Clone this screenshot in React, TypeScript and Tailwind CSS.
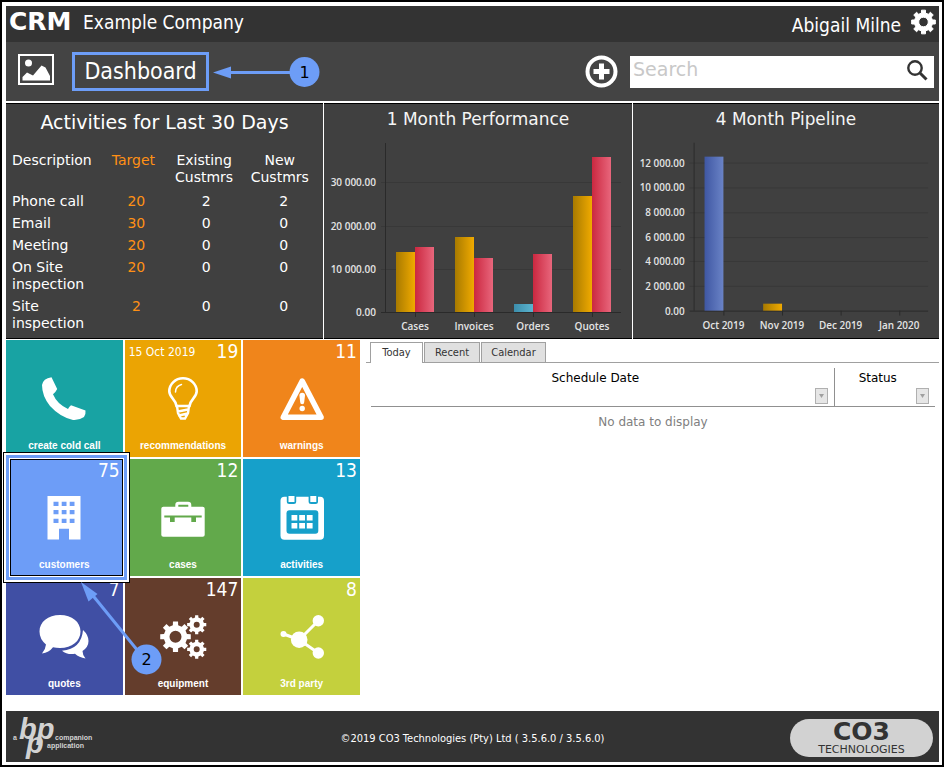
import React from 'react';

const activities = [
  { name: 'Phone call', target: 20, existing: 2, fresh: 2 },
  { name: 'Email', target: 30, existing: 0, fresh: 0 },
  { name: 'Meeting', target: 20, existing: 0, fresh: 0 },
  { name: 'On Site inspection', target: 20, existing: 0, fresh: 0 },
  { name: 'Site inspection', target: 2, existing: 0, fresh: 0 },
];

type Bar = { value: number; fill: string };
type Group = { label: string; bars: Bar[] };

const performance: Group[] = [
  { label: 'Cases', bars: [{ value: 13900, fill: 'gold' }, { value: 15000, fill: 'red' }] },
  { label: 'Invoices', bars: [{ value: 17400, fill: 'gold' }, { value: 12500, fill: 'red' }] },
  { label: 'Orders', bars: [{ value: 1900, fill: 'teal' }, { value: 13500, fill: 'red' }] },
  { label: 'Quotes', bars: [{ value: 26900, fill: 'gold' }, { value: 35900, fill: 'red' }] },
];

const pipeline: Group[] = [
  { label: 'Oct 2019', bars: [{ value: 12500, fill: 'blue' }] },
  { label: 'Nov 2019', bars: [{ value: 560, fill: 'gold' }] },
  { label: 'Dec 2019', bars: [] },
  { label: 'Jan 2020', bars: [] },
];

const gradients = [
  { id: 'gold', from: '#a87a00', to: '#f0aa00' },
  { id: 'red', from: '#cb2840', to: '#e8667c' },
  { id: 'teal', from: '#3c8eac', to: '#5cb4cf' },
  { id: 'blue', from: '#3f57a3', to: '#6a83c6' },
];

const gearPath = (cx: number, cy: number, r: number, hole: number, teeth = 8) => {
  const inner = r * 0.76;
  const step = (Math.PI * 2) / teeth;
  const points: string[] = [];
  for (let i = 0; i < teeth; i++) {
    const a = i * step - Math.PI / 2;
    [[-0.29, inner], [-0.21, r], [0.21, r], [0.29, inner]].forEach(([offset, radius]) => {
      const t = a + offset * step;
      points.push(`${(cx + radius * Math.cos(t)).toFixed(2)} ${(cy + radius * Math.sin(t)).toFixed(2)}`);
    });
  }
  return `M${points.join('L')}ZM${cx - hole} ${cy}a${hole} ${hole} 0 1 0 ${hole * 2} 0a${hole} ${hole} 0 1 0 ${-hole * 2} 0Z`;
};

const PhoneIcon = () => (
  <path d="M13.5.2 19.2 12Q17.5 15.5 15 17.3 19 27 30 32 31 30 33 28.2L47.5 33.5Q48 37 46 40 41 43.5 35 43 22 40 12 29 4 19 4 8 5 1.5 13.5.2Z" />
);

const BulbIcon = () => (
  <g fill="none" stroke="white" strokeLinecap="round">
    <path strokeWidth="2.6" d="M19.5 29C18.5 22 12.3 20.5 12.3 14.3A13.7 13 0 0 1 39.7 14.3C39.7 20.5 33.5 22 32.5 29Z" />
    <path strokeWidth="1.5" d="M18.5 15A8 8 0 0 1 24.5 7.5" />
    <path strokeWidth="2.4" d="M20 29 21 36 24 41.5H28L31 36 32 29M21 34.5 31 32.5M22 38.5 30.5 36.5" />
  </g>
);

const WarningIcon = () => (
  <>
    <path fill="none" stroke="white" strokeWidth="5.5" strokeLinejoin="round" d="M26.2 4 7.3 40.3H45.1Z" />
    <path d="M23.4 18.5a2.8 2.8 0 0 1 5.6 0l-.8 6.8a2 2 0 0 1-4 0Z" />
    <circle cx="26.2" cy="31.5" r="2.7" />
  </>
);

const BuildingIcon = () => (
  <path
    fillRule="evenodd"
    d="M9.5 0H42.5V43.5H31V32.7H21V43.5H9.5ZM15.5 5.7V10H20.5V5.7ZM23.7 5.7V10H28.5V5.7ZM31.7 5.7V10H36.5V5.7ZM15.5 14V18.3H20.5V14ZM23.7 14V18.3H28.5V14ZM31.7 14V18.3H36.5V14ZM15.5 22.7V27H20.5V22.7ZM23.7 22.7V27H28.5V22.7ZM31.7 22.7V27H36.5V22.7Z"
  />
);

const BriefcaseIcon = () => (
  <>
    <path fill="none" stroke="white" strokeWidth="3" d="M19.8 12V9q0-1.8 1.8-1.8H31q1.8 0 1.8 1.8v3" />
    <rect x="4.3" y="10.7" width="43.4" height="30" rx="2" />
    <path fill="#62a94b" d="M7.3 19.5H44.7V21.5H39V26H34.3V21.5H17.7V26H13V21.5H7.3Z" />
  </>
);

const CalendarIcon = () => (
  <>
    <rect x="4.5" y="0.8" width="43.5" height="43" rx="4" />
    <path fill="#16a0ca" d="M10.8 0H20.2V5.5Q20.2 8 17.7 8H13.3Q10.8 8 10.8 5.5ZM32.6 0H42V5.5Q42 8 39.5 8H35.1Q32.6 8 32.6 5.5Z" />
    <path d="M12.5 0H18.5V6H12.5ZM34.3 0H40.3V6H34.3Z" />
    <rect x="10.5" y="14.3" width="31.8" height="23.4" rx="3" fill="#16a0ca" />
    <path d="M15.5 19H21.3V24.5H15.5ZM23.2 19H29V24.5H23.2ZM30.8 19H36.6V24.5H30.8ZM15.5 27H21.3V32.5H15.5ZM23.2 27H29V32.5H23.2ZM30.8 27H36.6V32.5H30.8Z" />
  </>
);

const ChatIcon = () => (
  <>
    <path d="M22 0C34 0 42.5 7 42.5 16.5S34 33 22 33Q18 33 15 32.2 11 37.5 4 38.5 7.5 34.5 8 29.5 1.5 24 1.5 16.5C1.5 7 10 0 22 0Z" />
    <path d="M45 15Q50.5 20 50.5 26 50.5 32 44.5 36 44.5 40 47.5 43.5 41 42.5 37 38.8 29 40 24 35.7 43.5 34 45 15Z" />
  </>
);

const GearsIcon = () => (
  <>
    <path fillRule="evenodd" d={gearPath(18.5, 21.7, 15.5, 6)} />
    <path fillRule="evenodd" d={gearPath(39.7, 9.7, 9.7, 3)} />
    <path fillRule="evenodd" d={gearPath(39.7, 34.3, 9.7, 3)} />
  </>
);

const ShareIcon = () => (
  <>
    <path fill="none" stroke="white" strokeWidth="3" d="M7.5 19 23.2 24.7 42.3 5.7M23.2 24.7 42.3 38" />
    <circle cx="23.2" cy="24.7" r="8.3" />
    <circle cx="42.3" cy="5.7" r="5.7" />
    <circle cx="42.3" cy="38" r="5.7" />
    <circle cx="7.5" cy="19" r="3" />
  </>
);

const tiles = [
  { label: 'create cold call', bg: 'bg-[#18a3a3]', Icon: PhoneIcon },
  { label: 'recommendations', count: 19, date: '15 Oct 2019', bg: 'bg-[#eba403]', Icon: BulbIcon },
  { label: 'warnings', count: 11, bg: 'bg-[#f0851b]', Icon: WarningIcon },
  { label: 'customers', count: 75, bg: 'bg-[#6d9df7]', Icon: BuildingIcon, selected: true },
  { label: 'cases', count: 12, bg: 'bg-[#62a94b]', Icon: BriefcaseIcon },
  { label: 'activities', count: 13, bg: 'bg-[#16a0ca]', Icon: CalendarIcon },
  { label: 'quotes', count: 7, bg: 'bg-[#404fa4]', Icon: ChatIcon },
  { label: 'equipment', count: 147, bg: 'bg-[#643d2c]', Icon: GearsIcon },
  { label: '3rd party', count: 8, bg: 'bg-[#c4d03d]', Icon: ShareIcon },
];

const BarChart: React.FC<{ title: string; groups: Group[]; ticks: number[]; max: number }> = ({ title, groups, ticks, max }) => {
  const base = 208;
  const scale = 169 / max;
  const format = (n: number) => (n >= 1000 ? `${n / 1000} 000.00` : '0.00');

  return (
    <section className="bg-[#404040] border-y border-black">
      <svg viewBox="0 0 308 234" className="block w-full" role="img" aria-label={title}>
        <defs>
          {gradients.map((g) => (
            <linearGradient key={g.id} id={g.id}>
              <stop offset="0" stopColor={g.from} />
              <stop offset="1" stopColor={g.to} />
            </linearGradient>
          ))}
        </defs>
        <text x="154" y="21" textAnchor="middle" fill="#f5f5f5" fontSize="17" fontFamily="DejaVu Sans, sans-serif">{title}</text>
        {ticks.map((tick) => (
          <g key={tick}>
            <path d={`M57 ${Math.round(base - tick * scale) + 0.5}H297`} stroke={tick ? '#383838' : '#2a2a2a'} />
            <text x="52" y={Math.round(base - tick * scale) + 4} textAnchor="end" fill="#e4e4e4" fontSize="10" fontWeight="600" fontFamily="Open Sans, sans-serif">
              {format(tick)}
            </text>
          </g>
        ))}
        <path d="M61.5 39V208" stroke="#2a2a2a" />
        {groups.map((group, i) => {
          const center = 91 + i * 59;
          return (
            <g key={group.label}>
              <path d={`M${center + 0.5} 208v5`} stroke="#2a2a2a" />
              {group.bars.map((bar, n) => (
                <rect
                  key={n}
                  x={center - 19 + n * 19}
                  y={Math.round(base - bar.value * scale)}
                  width="19"
                  height={Math.round(bar.value * scale)}
                  fill={`url(#${bar.fill})`}
                />
              ))}
              <text x={center} y="226" textAnchor="middle" fill="#e4e4e4" fontSize="10" fontWeight="600" fontFamily="Open Sans, sans-serif">
                {group.label}
              </text>
            </g>
          );
        })}
      </svg>
    </section>
  );
};

const Header = () => (
  <header className="text-white font-['DejaVu_Sans_Condensed','DejaVu_Sans',sans-serif]">
    <div className="flex items-center h-9 bg-[#333333] px-[3px] pb-1">
      <span className="w-[74px] text-[25px] leading-8 font-bold font-['DejaVu_Sans',sans-serif]">CRM</span>
      <span className="text-[19px] leading-8">Example Company</span>
      <span className="ml-auto mr-2.5 pt-1.5 text-[19px] leading-8">Abigail Milne</span>
      <button aria-label="Settings">
        <svg width="25" height="26" viewBox="0 0 25 26" fill="white" stroke="white" strokeLinejoin="round">
          <path fillRule="evenodd" d={gearPath(12.5, 13, 12, 4.8)} />
        </svg>
      </button>
    </div>
    <div className="flex items-center h-[59px] bg-[#444444] pl-3 pr-[5px]">
      <svg width="36" height="32" viewBox="0 0 36 32" className="-mt-1" fill="white">
        <rect x="1" y="1" width="34" height="29" fill="none" stroke="white" strokeWidth="2" />
        <circle cx="10.5" cy="9" r="3.5" />
        <path d="M4.5 26.5V23L9 18.5 15 21.5 23.5 11.5 27.5 13.5 32 22V26.5Z" />
      </svg>
      <h1 className="ml-[18px] h-[39px] w-[137px] border-[3px] border-[#6d9df7] text-center text-[23px] leading-8">Dashboard</h1>
      <svg width="108" height="30" viewBox="0 0 108 30" className="ml-1 mr-auto">
        <path d="M16 15.5H80" stroke="#6d9df7" strokeWidth="3" />
        <path d="M0 15.5 18 9.5V21.5Z" fill="#6d9df7" />
        <circle cx="91.5" cy="15" r="15" fill="#6d9df7" />
        <text x="91.5" y="21" textAnchor="middle" fontSize="16" fontFamily="DejaVu Sans, sans-serif" fill="black">1</text>
      </svg>
      <button aria-label="Add" className="mr-3">
        <svg width="33" height="33" viewBox="0 0 33 33" fill="none" stroke="white" strokeWidth="4">
          <circle cx="16.5" cy="16.5" r="14" />
          <path strokeWidth="5" d="M16.5 8.5V24.5M8.5 16.5H24.5" />
        </svg>
      </button>
      <form className="flex items-center h-8 w-[304px] bg-white pr-1.5">
        <input
          type="text"
          aria-label="Search"
          placeholder="Search"
          className="flex-1 min-w-0 h-8 pl-[3px] pb-1.5 text-[19px] text-black placeholder:text-[#c8c8c8] outline-none font-['DejaVu_Sans',sans-serif]"
        />
        <button type="button" aria-label="Run search" className="-mt-1">
          <svg width="22" height="22" viewBox="0 0 22 22" fill="none" stroke="#333333">
            <circle cx="9" cy="9" r="6.7" strokeWidth="2.4" />
            <path d="M13.5 13.5 20.5 20.5" strokeWidth="3" />
          </svg>
        </button>
      </form>
    </div>
  </header>
);

const Activities = () => (
  <section className="bg-[#404040] border-y border-black text-white font-['DejaVu_Sans',sans-serif]">
    <h2 className="pt-1.5 text-center text-[19px] leading-6">Activities for Last 30 Days</h2>
    <table className="mt-[18px] w-full table-fixed text-[14px] leading-[17px]">
      <colgroup>
        <col className="w-[30%]" />
        <col className="w-[21%]" />
        <col className="w-[23%]" />
        <col className="w-[26%]" />
      </colgroup>
      <thead>
        <tr className="align-top">
          <th className="pl-1.5 pb-[7px] text-left font-normal">Description</th>
          <th className="pr-0.5 pb-[7px] font-normal text-[#ff9015]">Target</th>
          <th className="pb-[7px] font-normal">Existing Custmrs</th>
          <th className="pr-1 pb-[7px] font-normal">New Custmrs</th>
        </tr>
      </thead>
      <tbody>
        {activities.map((row) => (
          <tr key={row.name} className="align-top text-center">
            <td className="pl-1.5 pb-[5px] text-left">{row.name}</td>
            <td className="pl-1 text-[#ff9015]">{row.target}</td>
            <td className="pl-1">{row.existing}</td>
            <td className="pl-1">{row.fresh}</td>
          </tr>
        ))}
      </tbody>
    </table>
  </section>
);

const Tiles = () => (
  <nav className="relative grid grid-cols-3 gap-0.5 w-[354px]">
    {tiles.map(({ label, count, date, bg, Icon, selected }) => (
      <button key={label} className={`relative flex flex-col items-center h-[117px] text-white ${bg}`}>
        <span className="flex items-start justify-between w-full h-[37px] pl-1 pr-[3px] font-['DejaVu_Sans_Condensed','DejaVu_Sans',sans-serif]">
          <span className="text-[12px] leading-6">{date}</span>
          <span className="text-[19px] leading-[22px]">{count}</span>
        </span>
        <svg width="52" height="44" viewBox="0 0 52 44" fill="white">
          <Icon />
        </svg>
        <span className="mt-auto pb-[3px] text-[10px] leading-4 font-bold font-['Liberation_Sans',sans-serif]">{label}</span>
        {selected && (
          <span className="absolute -inset-[7px] -left-[3px] z-10 border border-black">
            <span className="block h-full border-2 border-white">
              <span className="block h-full border-[3px] border-[#6d9df7]">
                <span className="block h-full border border-white">
                  <span className="block h-full border border-black" />
                </span>
              </span>
            </span>
          </span>
        )}
      </button>
    ))}
    <svg width="84" height="96" viewBox="0 0 84 96" className="absolute left-[73px] top-[240px] z-20 pointer-events-none">
      <path d="M11 12 59 71" stroke="#6d9df7" strokeWidth="3" />
      <path d="M2 2 18.5 14 9.5 21.5Z" fill="#6d9df7" />
      <circle cx="67.5" cy="79.5" r="15" fill="#6d9df7" />
      <text x="67.5" y="85" textAnchor="middle" fontSize="16" fontFamily="DejaVu Sans, sans-serif" fill="black">2</text>
    </svg>
  </nav>
);

const FilterButton: React.FC<{ label: string }> = ({ label }) => (
  <button aria-label={label} className="ml-auto mr-1.5 flex items-center justify-center w-[13px] h-4 border border-[#b0b0b0] bg-[#e6e6e6]">
    <svg width="5" height="4" viewBox="0 0 5 4" fill="#a0a0a0"><path d="M0 0H5L2.5 4Z" /></svg>
  </button>
);

const Schedule = () => (
  <section className="flex-1 ml-1.5 pt-0.5">
    <div className="flex gap-px h-[21px] pl-1 border-b border-[#a0a0a0] text-[11px] leading-5 text-[#333333] font-['DejaVu_Sans_Condensed','DejaVu_Sans',sans-serif]">
      <button className="h-[21px] w-[53px] border border-b-0 border-[#a0a0a0] bg-white">Today</button>
      <button className="w-14 border border-b-0 border-[#a0a0a0] bg-[#e0e0e0]">Recent</button>
      <button className="w-[65px] border border-b-0 border-[#a0a0a0] bg-[#e0e0e0]">Calendar</button>
    </div>
    <div className="pl-[5px] pr-1 pt-[5px] font-['DejaVu_Sans',sans-serif] text-[12px]">
      <table className="w-full">
        <thead>
          <tr className="border-b border-[#909090]">
            <th className="border-r border-[#909090] p-0 font-normal">
              <div className="h-5 leading-5 pr-3.5">Schedule Date</div>
              <div className="flex h-[18px]"><FilterButton label="Filter schedule date" /></div>
            </th>
            <th className="w-[101px] p-0 font-normal">
              <div className="h-5 leading-5 pr-3.5">Status</div>
              <div className="flex h-[18px]"><FilterButton label="Filter status" /></div>
            </th>
          </tr>
        </thead>
        <tbody>
          <tr>
            <td colSpan={2} className="pt-1.5 text-center leading-[18px] text-[#808080]">No data to display</td>
          </tr>
        </tbody>
      </table>
    </div>
  </section>
);

const Footer = () => (
  <footer className="flex items-center justify-between h-[51px] bg-[#333333] px-1.5 pt-0.5 text-white">
    <svg width="143" height="46" viewBox="0 0 143 46" className="overflow-visible" fill="#d2d2d2" fontFamily="Liberation Sans, sans-serif" fontWeight="bold">
      <text x="1" y="25" fontSize="7">a</text>
      <text x="7" y="24" fontSize="29" fontStyle="italic">bp</text>
      <text x="14" y="38" fontSize="29" fontStyle="italic">p</text>
      <text x="43" y="25" fontSize="7">companion</text>
      <text x="35" y="33" fontSize="7">application</text>
    </svg>
    <p className="pt-0.5 text-[11px] leading-4 font-['DejaVu_Sans_Condensed','DejaVu_Sans',sans-serif]">©2019 CO3 Technologies (Pty) Ltd ( 3.5.6.0 / 3.5.6.0)</p>
    <div className="flex flex-col items-center justify-center w-[143px] h-[38px] rounded-full bg-[#d2d2d2] text-[#333333] font-['DejaVu_Sans',sans-serif]">
      <span className="text-[25px] leading-6 font-bold">CO3</span>
      <span className="text-[11px] leading-3">TECHNOLOGIES</span>
    </div>
  </footer>
);

export default function App() {
  return (
    <div className="border-2 border-black bg-white pt-1 pl-1 pr-[3px] pb-[3px] text-black">
      <Header />
      <div className="mt-0.5 grid grid-cols-[317fr_308fr_306fr] gap-px">
        <Activities />
        <BarChart title="1 Month Performance" groups={performance} ticks={[0, 10000, 20000, 30000]} max={39100} />
        <BarChart title="4 Month Pipeline" groups={pipeline} ticks={[0, 2000, 4000, 6000, 8000, 10000, 12000]} max={13650} />
      </div>
      <main className="mt-px mb-4 flex">
        <Tiles />
        <Schedule />
      </main>
      <Footer />
    </div>
  );
}
